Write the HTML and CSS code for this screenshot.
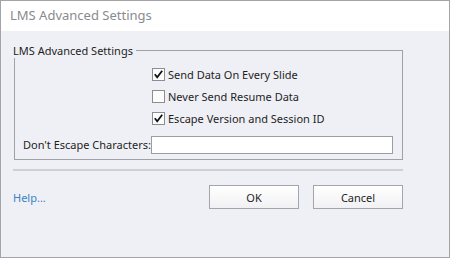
FILE: index.html
```html
<!DOCTYPE html>
<html lang="en">
  <head>
    <meta charset="UTF-8" />
    <title>LMS Advanced Settings</title>
    <link rel="stylesheet" href="styles.css">
  </head>
  <body>
    <div class="dialog">
      <header class="titlebar">LMS Advanced Settings</header>
      <main class="content">
        <section class="group">
          <div class="group-head"><span>LMS Advanced Settings</span><i></i></div>
          <div class="group-body">
            <label class="check">
              <svg class="box" width="13" height="13" viewBox="0 0 13 13"><rect x="0.5" y="0.5" width="12" height="12" fill="#fdfdfd" stroke="#8c8c94"/><path d="M2.8 6.2 L5.2 9.2 L10.2 2.8" fill="none" stroke="#111" stroke-width="1.8"/></svg>
              Send Data On Every Slide
            </label>
            <label class="check">
              <svg class="box" width="13" height="13" viewBox="0 0 13 13"><rect x="0.5" y="0.5" width="12" height="12" fill="#fdfdfd" stroke="#8c8c94"/></svg>
              Never Send Resume Data
            </label>
            <label class="check">
              <svg class="box" width="13" height="13" viewBox="0 0 13 13"><rect x="0.5" y="0.5" width="12" height="12" fill="#fdfdfd" stroke="#8c8c94"/><path d="M2.8 6.2 L5.2 9.2 L10.2 2.8" fill="none" stroke="#111" stroke-width="1.8"/></svg>
              Escape Version and Session ID
            </label>
            <span class="field-label">Don't Escape Characters:</span>
            <input class="field" type="text">
          </div>
        </section>
        <hr class="sep">
        <footer class="actions">
          <a class="help" href="#">Help...</a>
          <button class="btn">OK</button>
          <button class="btn">Cancel</button>
        </footer>
      </main>
    </div>
  </body>
</html>
```

FILE: styles.css
```css
/* Dialogo de ajustes: barra de titulo blanca y cuerpo gris azulado */
body {
  margin: 0;
  font-family: "Noto Sans", "DejaVu Sans", sans-serif;
  font-size: 11px;
  color: #1e1e1e;
}
.dialog {
  width: 450px;
  height: 258px;
  box-sizing: border-box;
  border: 1px solid #a4a4a8;
  background-color: #eff0f5;
}
.titlebar {
  height: 30px;
  line-height: 29px;
  padding-left: 9px;
  background-color: white;
  color: #8a8a8e;
  font-size: 13px;
}
.content {
  padding: 12px 46px 0 12px;
}

/* Groupbox: el titulo corta la linea superior */
.group-head {
  display: flex;
  height: 15px;
  line-height: 15px;
}
.group-head i {
  flex: 1;
  margin: 7px 0 0 3px;
  border-top: 1px solid #a0a0a8;
  border-right: 1px solid #a0a0a8;
}
.group-body {
  margin-left: 1px;
  border: 1px solid #a0a0a8;
  border-top: none;
  padding: 5px 9px 8px 8px;
  display: grid;
  grid-template-columns: 128px 1fr;
  grid-auto-rows: 22px;
}
.check {
  grid-column: 2;
  display: flex;
  align-items: center;
  gap: 3px;
  padding-left: 1px;
}
.box {
  flex: none;
}
.field-label {
  margin-top: 7px;
  line-height: 18px;
  white-space: nowrap;
  text-align: right;
  padding-right: 2px;
}
.field {
  margin: 7px 0 0 0;
  height: 18px;
  box-sizing: border-box;
  border: 1px solid #9c9ca4;
  background-color: white;
  padding: 0;
}

.sep {
  margin: 9px 0 0 0;
  border: none;
  height: 2px;
  background-color: #cfd0d6;
}

.actions {
  display: flex;
  align-items: center;
  gap: 14px;
  margin-top: 14px;
}
.help {
  margin-right: auto;
  color: #3b82c4;
  text-decoration: none;
}
.btn {
  width: 90px;
  height: 24px;
  border: 1px solid #a4a4ac;
  background: linear-gradient(#ffffff, #f1f1f4);
  font-family: inherit;
  font-size: 11px;
  color: #1e1e1e;
  padding: 0;
}
```
